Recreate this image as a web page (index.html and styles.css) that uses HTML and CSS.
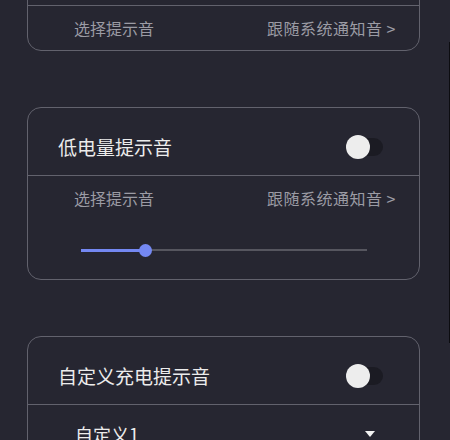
FILE: index.html
```html
<!doctype html>
<html lang=zh-CN>
<head>
	<title>提示音设置</title>
	<link rel="stylesheet" href="styles.css">
</head>

<body>
	<div class=list>
		<section class=card>
			<div class=head>
				充电提示音
				<span class=toggle></span>
			</div>
			<div class=pick>
				<span>选择提示音</span>
				<span class=value>跟随系统通知音 &gt;</span>
			</div>
		</section>

		<section class=card>
			<div class=head>
				低电量提示音
				<span class=toggle></span>
			</div>
			<div class=pick>
				<span>选择提示音</span>
				<span class=value>跟随系统通知音 &gt;</span>
			</div>
			<div class=volume>
				<div class=slider>
					<span class=fill style="width: 64px"></span>
					<span class=thumb></span>
				</div>
			</div>
		</section>

		<section class=card>
			<div class=head>
				自定义充电提示音
				<span class=toggle></span>
			</div>
			<div class=select>
				自定义1
				<span class=caret></span>
			</div>
		</section>
	</div>
	<div class=scrollbar></div>
</body>
</html>
```

FILE: styles.css
```css
html, body {
	margin: 0;
	height: 100%;
	overflow: hidden;
}

body {
	background: #262631;
	color: #ececec;
	font-family: "Noto Sans CJK SC", "Noto Sans", sans-serif;
}

/* page is scrolled a bit, first card's head is off screen */
.list {
	display: flex;
	flex-direction: column;
	gap: 56px;
	margin-top: -63px;
	padding: 0 30px 0 27px;
}

.card {
	border: 1px solid #62626d;
	border-radius: 14px;
}

.head {
	display: flex;
	align-items: center;
	justify-content: space-between;
	padding: 28px 36px 17px 30px;
	line-height: 22px;
	font-size: 19px;
	border-bottom: 1px solid #62626d;
}

.toggle {
	position: relative;
	width: 37px;
	height: 18px;
	border-radius: 9px;
	background: #1b1b23;

	&::before {
		content: "";
		position: absolute;
		left: 0;
		top: -3px;
		width: 24px;
		height: 24px;
		border-radius: 50%;
		background: #ededed;
	}
}

.pick {
	display: flex;
	justify-content: space-between;
	padding: 12px 23px 12px 46px;
	line-height: 20px;
	font-size: 16px;
	color: #9b9ba4;

	.value {letter-spacing: 0.5px}
}

.volume {
	padding: 24px 52px 23px 53px;
}

.slider {
	position: relative;
	height: 12px;
	display: flex;
	align-items: center;
	background: linear-gradient(#56565f, #56565f) center / 100% 2px no-repeat;

	.fill {
		height: 3px;
		background: #7488f2;
	}

	.thumb {
		width: 13px;
		height: 13px;
		margin-left: -6px;
		border-radius: 50%;
		background: #7488f2;
	}
}

.select {
	display: flex;
	align-items: center;
	justify-content: space-between;
	padding: 18px 44px 18px 47px;
	line-height: 22px;
	font-size: 18px;
}

.caret {
	width: 0;
	height: 0;
	border-left: 5px solid transparent;
	border-right: 5px solid transparent;
	border-top: 6px solid #f2f2f2;
}

.scrollbar {
	position: fixed;
	right: 0;
	top: 42px;
	width: 1px;
	height: 301px;
	background: #0c0c10;
}
```
